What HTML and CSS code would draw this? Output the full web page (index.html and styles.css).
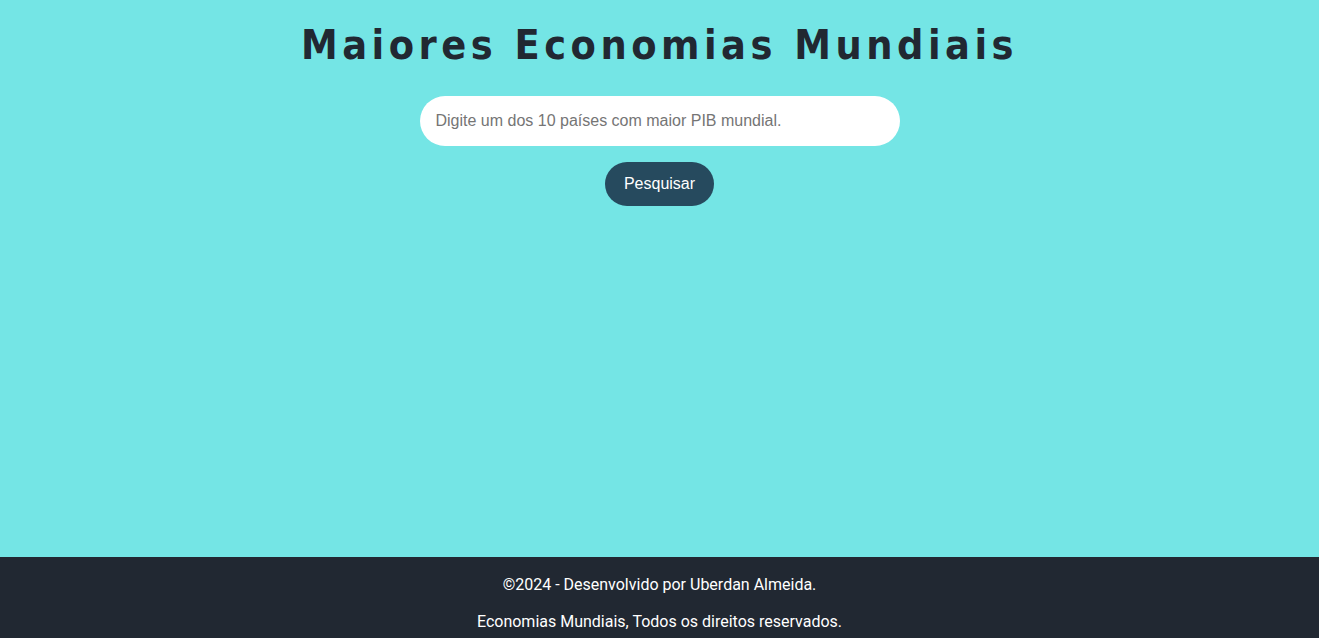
FILE: index.html
```html
<!DOCTYPE html>
<html lang="pt-BR">
<head>
<meta charset="utf-8">
<title>Maiores Economias Mundiais</title>
<link rel="stylesheet" href="styles.css">
</head>
<body>
<main class="main">
  <h1 class="title">Maiores Economias Mundiais</h1>
  <form class="search">
    <input class="search-input" type="text" placeholder="Digite um dos 10 países com maior PIB mundial.">
    <button class="search-button" type="button">Pesquisar</button>
  </form>
</main>
<footer class="footer">
  <p class="footer-text">©2024 - Desenvolvido por Uberdan Almeida.</p>
  <p class="footer-text">Economias Mundiais, Todos os direitos reservados.</p>
</footer>
</body>
</html>
```
FILE: styles.css
```css
html, body {
  margin: 0;
  padding: 0;
}
body {
  background: #74e5e5;
  font-family: "DejaVu Sans", "Liberation Sans", sans-serif;
}
.main {
  height: 557px;
  display: flex;
  flex-direction: column;
  align-items: center;
}
.title {
  margin: 19px 0 0;
  font-family: "DejaVu Sans Condensed", "DejaVu Sans", sans-serif;
  font-weight: bold;
  font-size: 41px;
  letter-spacing: 4.5px;
  color: #212832;
  line-height: 52px;
}
.search {
  margin-top: 25px;
  display: flex;
  flex-direction: column;
  align-items: center;
  gap: 16px;
}
.search-input {
  box-sizing: border-box;
  width: 480px;
  height: 50px;
  border: none;
  border-radius: 25px;
  background: #fff;
  padding: 0 16px;
  font-family: "Liberation Sans", Arial, sans-serif;
  font-size: 16px;
  outline: none;
}
.search-input::placeholder {
  color: #757575;
}
.search-button {
  box-sizing: border-box;
  width: 109px;
  height: 44px;
  border: none;
  border-radius: 22px;
  background: #264a5e;
  color: #fff;
  font-family: "Liberation Sans", Arial, sans-serif;
  font-size: 16px;
  cursor: pointer;
}
.footer {
  background: #212832;
  color: #fff;
  text-align: center;
  padding: 1px 0;
  font-family: Roboto, sans-serif;
}
.footer-text {
  margin: 16px 0;
  font-size: 16px;
  line-height: 21px;
}
```
